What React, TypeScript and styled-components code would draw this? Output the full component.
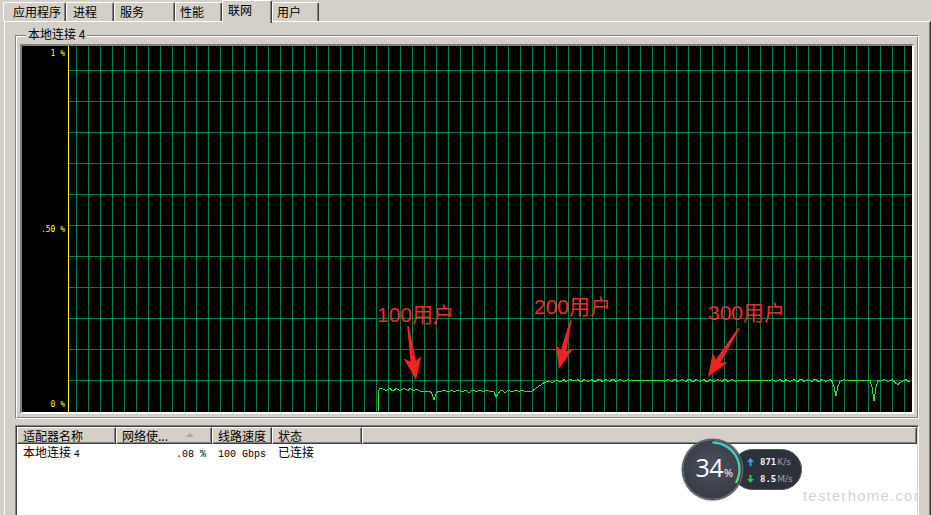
import React from 'react';
import styled, { createGlobalStyle } from 'styled-components';

const GlobalStyle = createGlobalStyle`
  html, body {
    margin: 0;
    height: 515px;
    overflow: hidden;
    background: #d4d0c8;
    font-family: "Noto Sans CJK SC", "Liberation Sans", sans-serif;
    font-size: 12px;
    color: #000;
  }
`;

const tabs = [
  { label: '应用程序', width: 63, pad: 9 },
  { label: '进程', width: 48, pad: 6 },
  { label: '服务', width: 61, pad: 5 },
  { label: '性能', width: 47, pad: 4 },
  { label: '联网', width: 50, pad: 5, active: true },
  { label: '用户', width: 47, pad: 4 },
];

const columns = [
  { title: '适配器名称', width: 99 },
  { title: '网络使...', width: 96, sorted: true },
  { title: '线路速度', width: 60 },
  { title: '状态', width: 90 },
];

// chart geometry, in page pixels
const PX = 69;
const PY = 46;
const PW = 843;
const PH = 366;

const dips = [
  { x: 434, y: 400 },
  { x: 496, y: 397 },
  { x: 836, y: 397 },
  { x: 874, y: 400 },
  { x: 898, y: 386 },
];

const baseY = (x: number) => {
  if (x < 418) return 389.5;
  if (x < 532) return 391;
  if (x < 545) return 391 - ((x - 532) / 13) * 9;
  if (x < 575) return 382 - ((x - 545) / 30) * 2;
  return 380.5;
};

const tracePoints = () => {
  const pts: string[] = ['378,411', '378,392', '380,388'];
  for (let x = 382; x <= 911; x += 2) {
    let y = baseY(x) + Math.round(Math.sin(x * 0.9) * 0.8 + Math.sin(x * 2.3) * 0.5);
    dips.forEach((d) => {
      const k = Math.max(0, 1 - Math.abs(x - d.x) / 3);
      y += (d.y - baseY(x)) * k;
    });
    pts.push(`${x},${y.toFixed(1)}`);
  }
  return pts.join(' ');
};

const arrow = (x1: number, y1: number, x2: number, y2: number) => {
  const dx = x2 - x1;
  const dy = y2 - y1;
  const L = Math.hypot(dx, dy);
  const ux = dx / L;
  const uy = dy / L;
  const nx = -uy;
  const ny = ux;
  const h = 19;
  const hw = 9;
  const back = 4;
  const t0 = 0.8;
  const t1 = 2.8;
  const neckX = x2 - ux * h;
  const neckY = y2 - uy * h;
  const p = (x: number, y: number) => `${x.toFixed(1)},${y.toFixed(1)}`;
  return [
    p(x1 + nx * t0, y1 + ny * t0),
    p(neckX + nx * t1, neckY + ny * t1),
    p(neckX + nx * hw - ux * back, neckY + ny * hw - uy * back),
    p(x2, y2),
    p(neckX - nx * hw - ux * back, neckY - ny * hw - uy * back),
    p(neckX - nx * t1, neckY - ny * t1),
    p(x1 - nx * t0, y1 - ny * t0),
  ].join(' ');
};

const notes = [
  { text: '100用户', x: 377, y: 322, from: [408, 326], to: [416, 380] },
  { text: '200用户', x: 534, y: 314, from: [571, 320], to: [559, 369] },
  { text: '300用户', x: 708, y: 320, from: [739, 328], to: [708, 377] },
];

export default function App() {
  const hLines = Array.from({ length: 11 }, (_, i) => 70 + i * 31);
  const vLines = Array.from({ length: 70 }, (_, i) => 76 + i * 12).filter((x) => x < PX + PW);

  return (
    <Screen>
      <GlobalStyle />
      <TabStrip>
        {tabs.map((t) => (
          <Tab key={t.label} $w={t.width} $pad={t.pad} $active={t.active}>
            {t.label}
          </Tab>
        ))}
      </TabStrip>
      <TabPage>
        <GroupBox>
          <Legend>本地连接 4</Legend>
          <Chart>
            <Axis>
              <span>1 %</span>
              <span>.50 %</span>
              <span>0 %</span>
            </Axis>
            <Plot>
              <svg width={PW} height={PH} viewBox={`${PX} ${PY} ${PW} ${PH}`} shapeRendering="crispEdges">
                {hLines.map((y) => (
                  <line key={'h' + y} x1={PX} x2={PX + PW} y1={y + 0.5} y2={y + 0.5} stroke="#008040" />
                ))}
                {vLines.map((x) => (
                  <line key={'v' + x} x1={x + 0.5} x2={x + 0.5} y1={PY} y2={PY + PH} stroke="#008040" />
                ))}
                <polyline points={tracePoints()} fill="none" stroke="#2ee62e" strokeWidth={1} />
                <g shapeRendering="auto">
                  {notes.map((n) => (
                    <g key={n.text}>
                      <polygon points={arrow(n.from[0], n.from[1], n.to[0], n.to[1])} fill="#f02222" />
                      <text
                        x={n.x}
                        y={n.y}
                        fill="#f42a2a"
                        fontSize={21}
                        fontFamily='"Liberation Sans", "Noto Sans CJK SC", sans-serif'
                      >
                        {n.text}
                      </text>
                    </g>
                  ))}
                </g>
              </svg>
            </Plot>
          </Chart>
        </GroupBox>
        <ListView>
          <Header>
            {columns.map((c) => (
              <HeaderCell key={c.title} $w={c.width}>
                {c.title}
                {c.sorted && <SortMark />}
              </HeaderCell>
            ))}
            <HeaderCell $w={0} $fill />
          </Header>
          <Row>
            <Cell $w={99}>
              本地连接 <Mono>4</Mono>
            </Cell>
            <Cell $w={96} $right>
              <Mono>.08 %</Mono>
            </Cell>
            <Cell $w={60}>
              <Mono>100 Gbps</Mono>
            </Cell>
            <Cell $w={90}>已连接</Cell>
          </Row>
        </ListView>
      </TabPage>

      <Meter>
        <Dial>
          <svg width="59" height="59" viewBox="0 0 59 59">
            <defs>
              <linearGradient id="arc" x1="0" y1="0" x2="0" y2="1">
                <stop offset="0" stopColor="#3ccfc0" />
                <stop offset="1" stopColor="#5ed07a" />
              </linearGradient>
            </defs>
            <path d="M29.5 2.5 A27 27 0 0 1 52.9 43" fill="none" stroke="url(#arc)" strokeWidth="2.4" />
          </svg>
          <Percent>
            34<small>%</small>
          </Percent>
        </Dial>
        <Pill>
          <Speed>
            <svg width="7" height="8" viewBox="0 0 7 8">
              <path d="M3.5 0 L7 4 L4.5 4 L4.5 8 L2.5 8 L2.5 4 L0 4 Z" fill="#3aa4ea" />
            </svg>
            <b>871</b>
            <span>K/s</span>
          </Speed>
          <Speed>
            <svg width="7" height="8" viewBox="0 0 7 8">
              <path d="M3.5 8 L7 4 L4.5 4 L4.5 0 L2.5 0 L2.5 4 L0 4 Z" fill="#3cc04a" />
            </svg>
            <b>8.5</b>
            <span>M/s</span>
          </Speed>
        </Pill>
      </Meter>
      <Watermark>testerhome.com</Watermark>
    </Screen>
  );
}

const Screen = styled.div`
  position: relative;
  width: 932px;
  height: 515px;
  overflow: hidden;
`;

const TabStrip = styled.div`
  display: flex;
  align-items: flex-end;
  height: 21px;
  padding-left: 3px;
`;

const Tab = styled.div<{ $w: number; $pad: number; $active?: boolean }>`
  position: relative;
  z-index: ${(p) => (p.$active ? 2 : 0)};
  box-sizing: border-box;
  width: ${(p) => p.$w}px;
  height: ${(p) => (p.$active ? 23 : 19)}px;
  margin-bottom: ${(p) => (p.$active ? -2 : 0)}px;
  padding: 2px 0 0 ${(p) => p.$pad}px;
  line-height: 14px;
  white-space: nowrap;
  background: #d4d0c8;
  border-top: 1px solid #fff;
  border-left: 1px solid #fff;
  border-right: 1px solid #404040;
  box-shadow: inset -1px 0 0 #808080;
  border-radius: 2px 2px 0 0;
`;

const TabPage = styled.div`
  position: relative;
  z-index: 1;
  display: flex;
  flex-direction: column;
  height: 520px;
  margin: 0 1px 0 4px;
  border-top: 1px solid #fff;
  border-left: 1px solid #fff;
  border-right: 1px solid #404040;
  box-shadow: inset -1px 0 0 #808080;
`;

const GroupBox = styled.section`
  display: flex;
  flex-direction: column;
  align-items: flex-start;
  margin: 13px 11px 0 10px;
  padding: 0 4px 4px 4px;
  border: 1px solid;
  border-color: #808080 #fff #fff #808080;
  box-shadow: inset 1px 1px 0 #fff, inset -1px -1px 0 #808080;
`;

const Legend = styled.div`
  position: relative;
  height: 14px;
  margin: -9px 0 0 6px;
  padding: 0 2px;
  line-height: 14px;
  background: #d4d0c8;
`;

const Chart = styled.div`
  align-self: stretch;
  display: flex;
  height: ${PH}px;
  margin-top: 3px;
  border: 2px solid;
  border-color: #808080 #fff #fff #808080;
  background: #000;
`;

const Axis = styled.div`
  box-sizing: border-box;
  width: 46px;
  display: flex;
  flex-direction: column;
  justify-content: space-between;
  align-items: flex-end;
  padding: 3px 3px 3px 0;
  font-family: "DejaVu Sans Mono", "Liberation Mono", monospace;
  font-size: 8px;
  line-height: 9px;
  color: #ffff00;
  white-space: pre;
`;

const Plot = styled.div`
  flex: 1;
  border-left: 1px solid #ffff00;
  overflow: hidden;
  svg {
    display: block;
  }
`;

const ListView = styled.div`
  height: 120px;
  margin: 6px 11px 0 10px;
  padding: 1px;
  background: #fff;
  border: 1px solid;
  border-color: #808080 #fff #fff #808080;
  box-shadow: inset 1px 1px 0 #404040, inset -1px -1px 0 #d4d0c8;
`;

const Header = styled.div`
  display: flex;
  height: 17px;
`;

const HeaderCell = styled.div<{ $w: number; $fill?: boolean }>`
  box-sizing: border-box;
  display: flex;
  align-items: center;
  flex: ${(p) => (p.$fill ? '1' : `0 0 ${p.$w}px`)};
  height: 17px;
  padding-left: 5px;
  line-height: 15px;
  white-space: nowrap;
  background: #d4d0c8;
  border-top: 1px solid #fff;
  border-left: 1px solid #fff;
  border-right: 1px solid #404040;
  border-bottom: 1px solid #404040;
  box-shadow: inset -1px -1px 0 #808080;
`;

const SortMark = styled.span`
  margin: 0 17px 1px auto;
  width: 0;
  height: 0;
  border-left: 4px solid transparent;
  border-right: 4px solid transparent;
  border-bottom: 4px solid #a8a8a8;
`;

const Row = styled.div`
  display: flex;
  height: 16px;
  line-height: 16px;
`;

const Cell = styled.div<{ $w: number; $right?: boolean }>`
  box-sizing: border-box;
  flex: 0 0 ${(p) => p.$w}px;
  padding: 0 6px;
  text-align: ${(p) => (p.$right ? 'right' : 'left')};
  white-space: nowrap;
`;

const Mono = styled.span`
  font-family: "Liberation Mono", "DejaVu Sans Mono", monospace;
  font-size: 10px;
`;

const Meter = styled.div`
  position: absolute;
  left: 683px;
  top: 440px;
  z-index: 5;
  display: flex;
  align-items: center;
`;

const Dial = styled.div`
  position: relative;
  z-index: 1;
  width: 59px;
  height: 59px;
  border-radius: 50%;
  background: radial-gradient(circle at 50% 45%, #4b515d 0%, #3a3e49 65%, #31353f 100%);
  box-shadow: 0 0 0 1.5px #5e6470, 0 1px 3px rgba(0, 0, 0, 0.35);
  display: flex;
  align-items: center;
  justify-content: center;
  svg {
    position: absolute;
    left: 0;
    top: 0;
  }
`;

const Percent = styled.div`
  position: relative;
  margin-left: 3px;
  font-family: "Open Sans", "Liberation Sans", sans-serif;
  font-size: 25px;
  line-height: 25px;
  color: #fff;
  letter-spacing: -0.5px;
  small {
    font-size: 11px;
    margin-left: 1px;
  }
`;

const Pill = styled.div`
  box-sizing: border-box;
  width: 70px;
  height: 41px;
  margin-left: -10px;
  padding: 6px 0 5px 14px;
  display: flex;
  flex-direction: column;
  justify-content: space-between;
  border-radius: 21px;
  background: #2c313b;
  border: 1px solid #4d535f;
`;

const Speed = styled.div`
  display: flex;
  align-items: center;
  height: 11px;
  svg {
    margin-right: 6px;
  }
  b {
    font-family: "DejaVu Sans Mono", monospace;
    font-size: 9px;
    font-weight: bold;
    color: #f2f2f2;
  }
  span {
    margin-left: 1px;
    font-family: "DejaVu Sans", sans-serif;
    font-size: 9px;
    color: #9ba1ab;
  }
`;

const Watermark = styled.div`
  position: absolute;
  left: 803px;
  top: 487px;
  z-index: 4;
  font-family: "Liberation Sans", sans-serif;
  font-size: 15px;
  letter-spacing: 1.2px;
  color: #d4d4d4;
  white-space: nowrap;
`;
